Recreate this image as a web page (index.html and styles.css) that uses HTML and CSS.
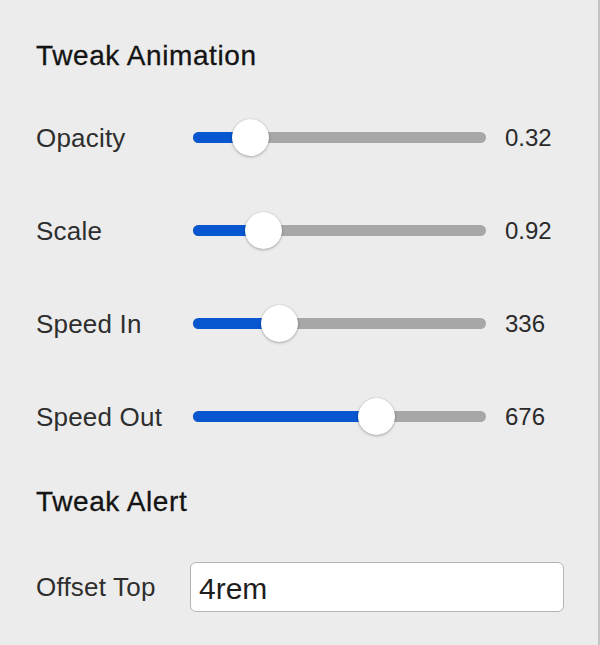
FILE: index.html
```html
<!DOCTYPE html>
<html>
<head>
<meta charset="utf-8">
<link rel="stylesheet" href="styles.css">
</head>
<body>
<div class="panel">
  <h2 class="heading">Tweak Animation</h2>
  <div class="rows">
    <div class="row">
      <span class="label">Opacity</span>
      <div class="slider">
        <div class="track"></div>
        <div class="fill" style="width:62px"></div>
        <div class="thumb" style="left:57px"></div>
      </div>
      <span class="value">0.32</span>
    </div>
    <div class="row">
      <span class="label">Scale</span>
      <div class="slider">
        <div class="track"></div>
        <div class="fill" style="width:75px"></div>
        <div class="thumb" style="left:70px"></div>
      </div>
      <span class="value">0.92</span>
    </div>
    <div class="row">
      <span class="label">Speed In</span>
      <div class="slider">
        <div class="track"></div>
        <div class="fill" style="width:91px"></div>
        <div class="thumb" style="left:86px"></div>
      </div>
      <span class="value">336</span>
    </div>
    <div class="row">
      <span class="label">Speed Out</span>
      <div class="slider">
        <div class="track"></div>
        <div class="fill" style="width:188px"></div>
        <div class="thumb" style="left:183px"></div>
      </div>
      <span class="value">676</span>
    </div>
  </div>
  <h2 class="heading heading-alert">Tweak Alert</h2>
  <div class="input-row">
    <span class="label label-input">Offset Top</span>
    <input class="text-input" type="text" value="4rem">
  </div>
</div>
</body>
</html>
```
FILE: styles.css
```css
html, body {
  margin: 0;
  padding: 0;
  background: #ececec;
}
body {
  font-family: "Liberation Sans", Arial, sans-serif;
}
.panel {
  box-sizing: border-box;
  width: 600px;
  height: 645px;
  padding: 39px 0 0 36px;
  border-right: 2px solid #c4c4c4;
  overflow: hidden;
}
.heading {
  margin: 0;
  font-size: 28px;
  line-height: 34px;
  font-weight: normal;
  letter-spacing: 0.6px;
  color: #141414;
  -webkit-text-stroke: 0.3px #141414;
}
.rows {
  display: flex;
  flex-direction: column;
  gap: 53px;
  margin-top: 45px;
}
.row {
  display: flex;
  align-items: center;
  height: 40px;
}
.label {
  width: 157px;
  flex: none;
  font-size: 26px;
  line-height: 30px;
  letter-spacing: 0.2px;
  color: #2e2e2e;
}
.slider {
  position: relative;
  width: 293px;
  height: 40px;
  flex: none;
}
.track {
  position: absolute;
  left: 0;
  right: 0;
  top: 14px;
  height: 11px;
  border-radius: 6px;
  background: #a7a7a7;
}
.fill {
  position: absolute;
  left: 0;
  top: 14px;
  height: 11px;
  border-radius: 6px 0 0 6px;
  background: #0856d0;
}
.thumb {
  position: absolute;
  top: 1px;
  width: 37px;
  height: 37px;
  margin-left: -18.5px;
  border-radius: 50%;
  background: #fff;
  box-shadow: 0 1px 3px rgba(0, 0, 0, 0.28), 0 0 1px rgba(0, 0, 0, 0.2);
}
.value {
  margin-left: 19px;
  font-size: 24px;
  line-height: 30px;
  color: #2a2a2a;
}
.heading-alert {
  margin-top: 48px;
}
.input-row {
  display: flex;
  align-items: center;
  margin-top: 43px;
  height: 50px;
}
.label-input {
  width: 154px;
}
.text-input {
  box-sizing: border-box;
  width: 374px;
  height: 50px;
  margin: 0;
  padding: 4px 8px 0;
  border: 1.5px solid #b4b4b4;
  border-radius: 6px;
  background: #fff;
  font-family: "Liberation Sans", Arial, sans-serif;
  font-size: 30px;
  color: #1e1e1e;
  outline: none;
}
```
